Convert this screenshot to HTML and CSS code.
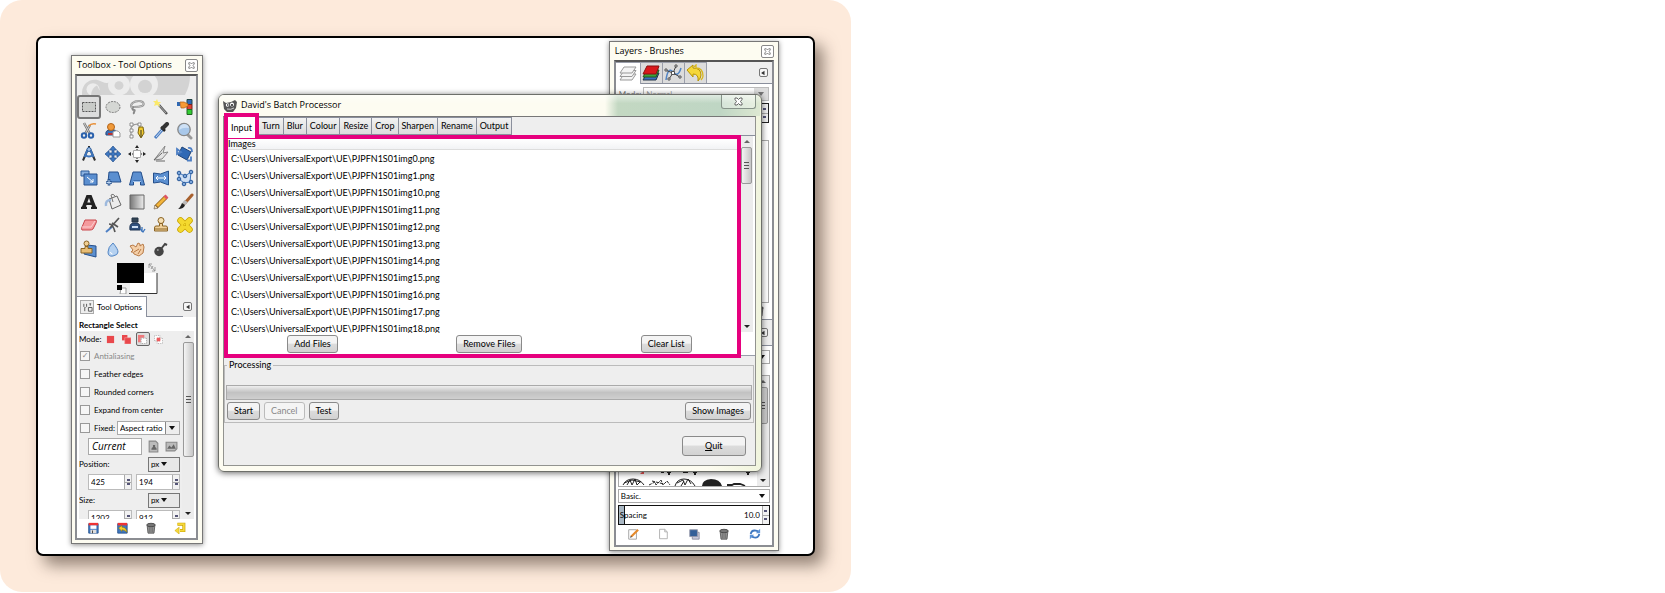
FILE: index.html
```html
<!DOCTYPE html>
<html lang="en">
<head>
<meta charset="utf-8">
<title>David's Batch Processor</title>
<link rel="stylesheet" href="styles.css">
</head>
<body>
<svg class="defs" width="0" height="0" aria-hidden="true">
  <defs>
    <linearGradient id="gGrey"><stop offset="0" stop-color="#777"/><stop offset="1" stop-color="#eee"/></linearGradient>
    <g id="x"><path d="M1 1h2l1.500 1.500L6 1h2v1.500L6.500 4.500 8 6.500V8H6L4.500 6.500 3 8H1V6.500l1.500-2L1 2.500z" fill="#fff" stroke="#555" stroke-width=".9"/></g>
    <g id="left"><path d="M6 1v6L1.500 4z" fill="#333"/></g>
    <g id="trash"><path d="M2.500 4h9l-1 9h-7z" fill="#999" stroke="#555"/><ellipse cx="7" cy="3.500" rx="5" ry="2" fill="#777" stroke="#444"/><path d="M5 6v6M7 6v6M9 6v6" stroke="#555" stroke-width=".7"/></g>
  </defs>
</svg>
<main class="card">
  <div class="board">

    <section class="win toolbox">
      <header class="title"><h2>Toolbox - Tool Options</h2><button class="close" aria-label="Close toolbox"><svg viewBox="0 0 9 9"><use href="#x"/></svg></button></header>
      <div class="frame">
        <svg class="banner" viewBox="0 0 108 20" preserveAspectRatio="none"><path d="M0 20C-1 7 10 0 20 6Q28 10 30 2L31 0H108Q108 10 103 20z" fill="#d3d3d3"/><circle cx="11" cy="14" r="6.500" fill="#ececec"/><path d="M9 20q1-8 6-10l5 10z" fill="#d3d3d3"/><circle cx="37" cy="9.500" r="11" fill="#ececec"/><circle cx="37" cy="10" r="4.500" fill="#d3d3d3"/><circle cx="62" cy="9" r="14" fill="#ececec"/><circle cx="63" cy="11" r="7" fill="#d3d3d3"/></svg>
        <div class="tools">
          <button class="on" aria-label="Rectangle select"><svg viewBox="0 0 18 18"><path d="M2.500 4.500h13v9h-13z" fill="#c9cbc8" stroke="#555" stroke-dasharray="2 1"/></svg></button>
          <button aria-label="Ellipse select"><svg viewBox="0 0 18 18"><ellipse cx="9" cy="9" rx="7" ry="5.500" fill="#d5d7d4" stroke="#777" stroke-dasharray="2 1"/></svg></button>
          <button aria-label="Free select"><svg viewBox="0 0 18 18"><path d="M4 10C1 6 6 3 11 3s6 4 3 5-6 1-8 1-2 3 0 3-1 2 0 4" fill="none" stroke="#888" stroke-width="2"/><path d="M4 10C1 6 6 3 11 3s6 4 3 5-6 1-8 1" fill="none" stroke="#ddd" stroke-width=".7"/></svg></button>
          <button aria-label="Fuzzy select"><svg viewBox="0 0 18 18"><path d="M7 7l8 9" stroke="#555" stroke-width="2.500"/><path d="M7 7l7 8" stroke="#aaa"/><path d="M5 1l1 3 3 0-2 2 1 3-3-2-3 1 1-3-2-2h3z" fill="#fbe96a"/></svg></button>
          <button aria-label="Select by color"><svg viewBox="0 0 18 18"><path d="M11 1.500h5v5h-5z" fill="#2f69b5" stroke="#244"/><path d="M11 6.500h5v5h-5z" fill="#d43" stroke="#722"/><path d="M11 11.500h5v5h-5z" fill="#3c3" stroke="#262"/><path d="M1 4h3v4H1z" fill="#2f69b5"/><path d="M4 4h4l4 2v2l-4 2H5z" fill="#f79a35" stroke="#b05a10" stroke-width=".7"/></svg></button>

          <button aria-label="Scissors select"><svg viewBox="0 0 18 18"><path d="M4 1l6 11M10 3L5 12" stroke="#777" stroke-width="2.500"/><path d="M4 1l6 11M10 3L5 12" stroke="#ccc"/><path d="M9 4q2-3 7-2" stroke="#e9913a" fill="none" stroke-width="1.500"/><circle cx="4" cy="13.500" r="2.200" fill="none" stroke="#2b62ad" stroke-width="2"/><circle cx="11" cy="13.500" r="2.200" fill="none" stroke="#2b62ad" stroke-width="2"/></svg></button>
          <button aria-label="Foreground select"><svg viewBox="0 0 18 18"><path d="M2 13q-1-5 4-5h4q3 0 3 5z" fill="#3b6fb6" stroke="#27497c"/><path d="M4 11h7v2H4z" fill="#b33"/><circle cx="7" cy="5" r="3.500" fill="#f09a3a" stroke="#b3641a"/><path d="M9 15V10q4-3 7 1v4z" fill="#fff" stroke="#999"/></svg></button>
          <button aria-label="Paths"><svg viewBox="0 0 18 18"><path d="M3 16V6q1-4 8-4" stroke="#888" fill="none"/><path d="M2 1h3v3H2zM2 7h3v3H2zM2 13h3v3H2zM10 1h3v3h-3z" fill="#fff" stroke="#777" stroke-width=".8"/><path d="M11 5h4l1 6-3 5-3-5z" fill="#f3cc2f" stroke="#7a6210"/><path d="M13 8v7" stroke="#333"/></svg></button>
          <button aria-label="Color picker"><svg viewBox="0 0 18 18"><path d="M11 7l-8 9" stroke="#4d7fc4" stroke-width="3"/><path d="M10 8l-6 7" stroke="#c7dbf2"/><path d="M9 5l4 4" stroke="#222" stroke-width="2.500"/><path d="M11 6l4-4" stroke="#333" stroke-width="4" stroke-linecap="round"/></svg></button>
          <button aria-label="Zoom"><svg viewBox="0 0 18 18"><path d="M11 12l4 4" stroke="#999" stroke-width="3" stroke-linecap="round"/><circle cx="8" cy="7.500" r="6.200" fill="#a9c8ea" stroke="#888" stroke-width="1.300"/><path d="M3 8q4-3 10-2-1-4-5-4T3 8z" fill="#cfe1f5"/></svg></button>

          <button aria-label="Measure"><svg viewBox="0 0 18 18"><path d="M9 1v3M7.500 5L3 15.500M10.500 5L15 15.500" fill="none" stroke="#333" stroke-width="2"/><path d="M7.500 5L4.500 12M10.500 5l3 7M5 10q4 3 8 0" fill="none" stroke="#3c74bc" stroke-width="2"/><circle cx="9" cy="4.500" r="2" fill="#9dbde4" stroke="#2d5f9f"/></svg></button>
          <button aria-label="Move"><svg viewBox="0 0 18 18"><path d="M9 1l3.500 4H10v3h3V5.500L17 9l-4 3.500V10h-3v3h2.500L9 17l-3.500-4H8v-3H5v2.500L1 9l4-3.500V8h3V5H5.500z" fill="#3f78c0" stroke="#244f8c" stroke-width=".7"/></svg></button>
          <button aria-label="Align"><svg viewBox="0 0 18 18"><path d="M5.500 5.500h7v7h-7z" fill="#fff" stroke="#aaa"/><path d="M9 0l2 3H7zM9 18l2-3H7zM0 9l3-2v4zM18 9l-3-2v4z" fill="#222"/><path d="M9 2v3M9 13v3M2 9h3M13 9h3" stroke="#222" stroke-dasharray="1 1"/></svg></button>
          <button aria-label="Crop"><svg viewBox="0 0 18 18"><path d="M2 15L13 1l-2 7 5-1-6 7z" fill="#e4e4e4" stroke="#888"/><path d="M2 15l8-7M4 16h9" stroke="#666"/></svg></button>
          <button aria-label="Rotate"><svg viewBox="0 0 18 18"><path d="M6 2l9 5-4 8-9-5z" fill="#2f69b5" stroke="#1f4478"/><path d="M1 4l4 3-4 2zM12 3q4-1 4 4M11 15.500h4v-4" fill="none" stroke="#4d7fc4" stroke-width="1.800"/></svg></button>

          <button aria-label="Scale"><svg viewBox="0 0 18 18"><path d="M1 2h8v5H1z" fill="#8bb2e0" stroke="#2b5a99"/><path d="M4 5h13v11H4z" fill="#5b8fd0" stroke="#244f8c"/><path d="M7 8l6 5m0-3v3h-3" stroke="#fff" fill="none"/></svg></button>
          <button aria-label="Shear"><svg viewBox="0 0 18 18"><path d="M5 3h9l3 10H4z" fill="#5b8fd0" stroke="#244f8c"/><path d="M5 10v6.500M2 13.500h6" stroke="#244f8c" stroke-width="2.600"/><path d="M5 11v4.500M2.500 13.500h5" stroke="#bcd6f2"/></svg></button>
          <button aria-label="Perspective"><svg viewBox="0 0 18 18"><path d="M5 3h8l3.500 13h-4v-4h-7v4h-4z" fill="#5b8fd0" stroke="#244f8c"/><path d="M5 12.500h8" stroke="#9dc0ea"/></svg></button>
          <button aria-label="Flip"><svg viewBox="0 0 18 18"><path d="M1.500 4l7 1 8-3v14l-8-3-7 1z" fill="#5b8fd0" stroke="#244f8c"/><path d="M4 9h10M6 7L4 9l2 2M12 7l2 2-2 2" stroke="#fff" fill="none"/></svg></button>
          <button aria-label="Cage transform"><svg viewBox="0 0 18 18"><path d="M3 4l6 3 6-4-1 10-6 1-5-4z" fill="#cfdff3" stroke="#3c74bc"/><g fill="#7ba5da" stroke="#2b5a99"><circle cx="3" cy="4" r="1.800"/><circle cx="9" cy="7" r="1.800"/><circle cx="15" cy="3" r="1.800"/><circle cx="15" cy="13" r="1.800"/><circle cx="8" cy="15" r="1.800"/><circle cx="3" cy="10" r="1.800"/></g></svg></button>

          <button aria-label="Text"><svg viewBox="0 0 18 18"><path d="M1 16v-2l1-.5L6.500 2h5L16 13.500l1 .5v2h-6v-2l1-.5-.5-1.500h-5L6 13.500l1 .5v2zM7.300 9.500h3.200L9 5z" fill="#222" fill-rule="evenodd"/></svg></button>
          <button aria-label="Bucket fill"><svg viewBox="0 0 18 18"><path d="M5 6l8-3 4 9-9 4z" fill="#ececec" stroke="#666"/><path d="M2 13q-1-6 5-6" fill="none" stroke="#9db9dd" stroke-width="2.500"/><path d="M9 9L7 2q2-2 4 1" fill="none" stroke="#777"/></svg></button>
          <button aria-label="Blend"><svg viewBox="0 0 18 18"><path d="M2 2h14v14H2z" fill="url(#gGrey)" stroke="#666"/></svg></button>
          <button aria-label="Pencil"><svg viewBox="0 0 18 18"><path d="M4 14L14 4" stroke="#8a5a14" stroke-width="4.500"/><path d="M5 13l9-9" stroke="#f2b43c" stroke-width="3"/><path d="M13 5l2-2" stroke="#d56" stroke-width="4"/><path d="M2 16l1-4 3 3z" fill="#f5dfb8" stroke="#654" stroke-width=".6"/></svg></button>
          <button aria-label="Paintbrush"><svg viewBox="0 0 18 18"><path d="M16 2L9 10" stroke="#a8612e" stroke-width="3" stroke-linecap="round"/><path d="M10 8l-2 3" stroke="#bbb" stroke-width="4"/><path d="M9 12q-1 4-7 4 2-1 4-6z" fill="#222"/></svg></button>

          <button aria-label="Eraser"><svg viewBox="0 0 18 18"><path d="M5 4h11q1 1 0 3l-3 6q-1 1-3 1H2q-1-1 0-3z" fill="#f59a9d" stroke="#c9464c"/><path d="M2 11h9l4-6" fill="none" stroke="#fbd0d2"/></svg></button>
          <button aria-label="Airbrush"><svg viewBox="0 0 18 18"><path d="M2 16l7-6" stroke="#4d7fc4" stroke-width="2"/><path d="M6 12l9-10M8 7l6 4M5 8q4 0 6 8" stroke="#555" stroke-width="1.700" fill="none"/></svg></button>
          <button aria-label="Ink"><svg viewBox="0 0 18 18"><path d="M4 2h6v4H4z" fill="#345" stroke="#234"/><path d="M2 14q-1-6 3-7h4q4 1 3 7z" fill="#31527f" stroke="#1d3352"/><path d="M4 10h6v2H4z" fill="#cfe0f4"/><path d="M12 13l3 3 2-3M14 11v5" fill="none" stroke="#3c74bc" stroke-width="1.300"/></svg></button>
          <button aria-label="Clone"><svg viewBox="0 0 18 18"><circle cx="9" cy="4.500" r="3" fill="#f6e0b5" stroke="#8a6425"/><path d="M7.500 7.500h3V10H14q1.500 0 1.500 2v3h-13v-3q0-2 1.500-2h3.500z" fill="#f0d09a" stroke="#8a6425"/><path d="M3 13h12" stroke="#8a6425"/></svg></button>
          <button aria-label="Heal"><svg viewBox="0 0 18 18"><path d="M4.500 4.500l9 9M13.500 4.500l-9 9" stroke="#c9a400" stroke-width="6.500" stroke-linecap="round"/><path d="M4.500 4.500l9 9M13.500 4.500l-9 9" stroke="#f4d92e" stroke-width="5" stroke-linecap="round"/><path d="M7 9h4M9 7v4" stroke="#c9a400" stroke-dasharray="1 1"/></svg></button>

          <button aria-label="Perspective clone"><svg viewBox="0 0 18 18"><path d="M7 5l9 1v11l-12-3z" fill="#5b8fd0" stroke="#244f8c"/><circle cx="6.500" cy="3.500" r="2.500" fill="#f0cf94" stroke="#8a6425"/><path d="M5 6.500h3v2h4V13H1V8.500h4z" fill="#e8bd74" stroke="#8a6425"/></svg></button>
          <button aria-label="Blur"><svg viewBox="0 0 18 18"><path d="M9 3q5 6 5 9t-5 4-5-4 5-9z" fill="#b5d1f0" stroke="#5285c4"/><path d="M6.500 12q0 2 2 2" stroke="#fff" fill="none"/></svg></button>
          <button aria-label="Smudge"><svg viewBox="0 0 18 18"><path d="M2 6l3-1 3 2 2-4 2 1v2l3-2 1 3-1 6-4 3-5-2-1-2H3l2-2z" fill="#f4cfa8" stroke="#b87b48"/><path d="M6 12l5-3M10 14l3-5" stroke="#b87b48"/></svg></button>
          <button aria-label="Dodge"><svg viewBox="0 0 18 18"><circle cx="7" cy="11.500" r="4.700" fill="#444"/><path d="M9 9l4-5 2 1" stroke="#444" stroke-width="2" fill="none"/><circle cx="5.800" cy="10" r="1" fill="#999"/></svg></button>
        </div>
        <div class="swatches">
          <svg viewBox="0 0 42 31"><path d="M14 10h27v21H14z" fill="#fff"/><path d="M41 10v20.500H13" fill="none" stroke="#333"/><path d="M1 0h27v20H1z" fill="#000"/><path d="M5 25h5v6H4z" fill="#fff" stroke="#999"/><path d="M1 22h5v5H1z" fill="#000"/><path d="M33 5V1h3M33 1l6 7M39 4v4h-3M35 6l2-3" fill="none" stroke="#888" stroke-width=".8"/></svg>
        </div>
        <div class="dockhead">
          <div class="docktab"><span class="chip"><svg viewBox="0 0 12 12"><path d="M2 2v3l1 1v4M5 2v3L4 6M8 2h2M9 2v2M7 6h4v4H7z" fill="none" stroke="#555"/></svg></span>Tool Options</div>
          <button class="menu" aria-label="Configure this tab"><svg viewBox="0 0 8 8"><use href="#left"/></svg></button>
        </div>
        <div class="options">
          <h3>Rectangle Select</h3>
          <div class="optview">
            <div class="optlist">
              <div class="row mode">Mode:
                <button aria-label="Replace"><svg viewBox="0 0 10 10"><path d="M1 1h8v8H1z" fill="#e9484c"/></svg></button>
                <button aria-label="Add"><svg viewBox="0 0 10 10"><path d="M0 0h6v6H0z" fill="#e9484c"/><path d="M3 3h7v7H3z" fill="#e9484c" stroke="#f5a5a6" stroke-width=".6"/></svg></button>
                <button class="on" aria-label="Subtract"><svg viewBox="0 0 10 10"><path d="M0 0h7v3H3v5H0z" fill="#ee7a7c"/><path d="M3.500 3.500h6v6h-6z" fill="#fff" stroke="#999" stroke-dasharray="1 1"/></svg></button>
                <button aria-label="Intersect"><svg viewBox="0 0 10 10"><path d="M.5.5h6v6h-6zM3.500 3.500h6v6h-6z" fill="#fff" stroke="#aaa" stroke-dasharray="1 1"/><path d="M3 3h4v4H3z" fill="#ee5a5d"/></svg></button>
              </div>
              <label class="row dim"><input type="checkbox" checked disabled>Antialiasing</label>
              <label class="row"><input type="checkbox">Feather edges</label>
              <label class="row"><input type="checkbox">Rounded corners</label>
              <label class="row"><input type="checkbox">Expand from center</label>
              <div class="row fixed"><label><input type="checkbox">Fixed:</label><span class="drop grow"><select aria-label="Fixed"><option>Aspect ratio</option></select></span></div>
              <div class="row current"><input type="text" value="Current" aria-label="Ratio">
                <button aria-label="Portrait"><svg viewBox="0 0 12 12"><path d="M2 1h6l2 2v8H2z" fill="#bbb" stroke="#888"/><path d="M4 9q0-2 1.500-2.500v-2h2v2Q9 7 9 9z" fill="#666"/></svg></button>
                <button aria-label="Landscape"><svg viewBox="0 0 12 12"><path d="M1 2h10v6L9 10H1z" fill="#bbb" stroke="#888"/><path d="M2 8l2-3 2 2 2-3 2 4z" fill="#666"/></svg></button>
              </div>
              <div class="row unit"><span>Position:</span><span class="drop px"><select aria-label="Position unit"><option>px</option></select></span></div>
              <div class="row pair"><span class="spin"><input type="text" value="425" aria-label="Position x"><i></i></span><span class="spin"><input type="text" value="194" aria-label="Position y"><i></i></span></div>
              <div class="row unit"><span>Size:</span><span class="drop px"><select aria-label="Size unit"><option>px</option></select></span></div>
              <div class="row pair"><span class="spin"><input type="text" value="1202" aria-label="Width"><i></i></span><span class="spin"><input type="text" value="912" aria-label="Height"><i></i></span></div>
            </div>
            <div class="scroll"><i class="up"></i><b class="thumb tall"></b><i class="down"></i></div>
          </div>
          <div class="iconbar">
            <button aria-label="Save options"><svg viewBox="0 0 14 14"><path d="M2 2h11v11H2z" fill="#3f78c0" stroke="#27538f"/><path d="M2 1h11v3H2z" fill="#e33"/><path d="M4 4h7v4H4z" fill="#fff"/><path d="M4 9h7v4H4z" fill="#ddd"/><path d="M6 10h1v3H6z" fill="#333"/></svg></button>
            <button aria-label="Restore options"><svg viewBox="0 0 14 14"><path d="M2 2h11v11H2z" fill="#3f78c0" stroke="#27538f"/><path d="M2 1h11v3H2z" fill="#e33"/><path d="M3 7l4-3v2q5 0 6 6-3-3-6-3v2z" fill="#f5cf2a" stroke="#8a6d00" stroke-width=".6"/></svg></button>
            <button aria-label="Delete options"><svg viewBox="0 0 14 14"><use href="#trash"/></svg></button>
            <button aria-label="Reset options"><svg viewBox="0 0 14 14"><path d="M4 2.500h7.500V10H7" fill="none" stroke="#c9a400" stroke-width="3.500"/><path d="M4 2.500h7.500V10H7" fill="none" stroke="#f5d73a" stroke-width="2"/><path d="M1 10l5-4v8z" fill="#f5d73a" stroke="#c9a400" stroke-width=".6"/></svg></button>
          </div>
        </div>
      </div>
    </section>

    <section class="win layers">
      <header class="title"><h2>Layers - Brushes</h2><button class="close" aria-label="Close layers"><svg viewBox="0 0 9 9"><use href="#x"/></svg></button></header>
      <div class="frame">
        <div class="ltabs">
          <button class="sel" aria-label="Layers"><svg viewBox="0 0 18 18"><g fill="#f4f4f4" stroke="#999"><path d="M5 10h12l-4 6H1z"/><path d="M5 6.500h12l-4 6H1z"/><path d="M5 3h12l-4 6H1z"/></g></svg></button>
          <button aria-label="Channels"><svg viewBox="0 0 18 18"><path d="M5 9h12l-3 7H1z" fill="#3a6fc0" stroke="#234"/><path d="M5 6h12l-3 7H1z" fill="#3aa53a" stroke="#252"/><path d="M5 2h12l-3 8H1z" fill="#d8191c" stroke="#811"/></svg></button>
          <button aria-label="Paths"><svg viewBox="0 0 18 18"><path d="M2 16Q4 2 9 8t8-4" fill="none" stroke="#5285c4" stroke-width="1.500"/><path d="M1 6l8 3 7 4M5 15l4-6 3-7" fill="none" stroke="#444"/><path d="M1 5h2v2H1zM7.500 7.500h3v3h-3zM15 12h2v2h-2zM11 1h2v2h-2zM4 14h2v2H4z" fill="#fff" stroke="#333" stroke-width=".8"/></svg></button>
          <button aria-label="Undo history"><svg viewBox="0 0 18 18"><path d="M1 6l6-5v3q8 0 8 7 0 3-3 6 1-7-5-7v3z" fill="#f5d73a" stroke="#b89500"/><path d="M8 3l2-2v3q7 0 7 8 0 2-2 4" fill="none" stroke="#d9b71c" stroke-width="1.300"/></svg></button>
          <button class="menu" aria-label="Configure this tab"><svg viewBox="0 0 8 8"><use href="#left"/></svg></button>
        </div>
        <div class="lbody">
          <div class="lmode"><label for="lm">Mode:</label><span class="drop grow faint"><select id="lm" disabled><option>Normal</option></select></span></div>
          <div class="lopacity"><span class="spin"><input type="text" aria-label="Opacity" disabled><i></i></span></div>
          <div class="llist"></div>
          <svg class="ltrash" viewBox="0 0 14 14"><use href="#trash"/></svg>
        </div>
        <div class="bstrip"><button class="menu" aria-label="Configure brushes tab"><svg viewBox="0 0 8 8"><use href="#left"/></svg></button></div>
        <div class="bbody">
          <span class="drop filter"><select aria-label="Filter"><option></option></select></span>
          <div class="brushes">
            <svg viewBox="0 0 136 18"><path d="M25 2v4h-4z" fill="#e55"/><g fill="#222"><path d="M42 3h3v2h-3zM48 4h4v1h-4zM49 3h2v4h-2zM64 3h5v2h-5zM74 4h4v1h-4zM75 3h2v4h-2zM88 3h2v1h-2zM93 3h1v1h-1zM118 3h3v1h-3zM127 4h4v1h-4zM128 3h2v4h-2z"/><path d="M83 18q0-6 9-7 9 0 11 7z"/></g><g fill="none" stroke="#222" stroke-width="1"><path d="M4 17q3-6 10-6t11 6M8 17l3-5 2 5 3-6 2 6 4-4M5 15l8-3 9 2"/><path d="M30 17l6-3 1 3 5-5 2 5 4-4 3 4M33 13l12 3" stroke-dasharray="3 1"/><path d="M56 18q2-7 9-7t11 7M58 15l6-3 2 5 3-6 3 5M62 18l3-5"/><path d="M108 17h5l2-1h6l3 1 2 1" stroke-width="1.800"/></g></svg>
            <div class="scroll"><i class="up"></i><b class="thumb"></b><i class="down"></i></div>
          </div>
          <span class="drop basic"><select aria-label="Brush set"><option>Basic.</option></select></span>
          <div class="spacing"><label for="sp">Spacing</label><input id="sp" type="text" value="10.0"><i class="arrows"></i></div>
          <div class="iconbar">
            <button aria-label="Edit brush"><svg viewBox="0 0 14 14"><path d="M2 2h9v11H2z" fill="#fff" stroke="#999"/><path d="M5 10l8-8" stroke="#e58a2c" stroke-width="2.500"/><path d="M3.500 11.500l1-2.500 1.500 1.500z" fill="#333"/></svg></button>
            <button aria-label="New brush"><svg viewBox="0 0 14 14"><path d="M3 1.500h6l3 3v8H3z" fill="#fff" stroke="#aaa"/><path d="M9 1.500v3h3" fill="none" stroke="#aaa"/></svg></button>
            <button aria-label="Duplicate brush"><svg viewBox="0 0 14 14"><path d="M5 5h8v8H5z" fill="#ccd" stroke="#889"/><path d="M2 2h9v8H2z" fill="#345f98" stroke="#99a"/></svg></button>
            <button aria-label="Delete brush"><svg viewBox="0 0 14 14"><use href="#trash"/></svg></button>
            <button aria-label="Refresh brushes"><svg viewBox="0 0 14 14"><path d="M2 7q1-5 6-4l3 1M12 7q-1 5-6 4L3 10" fill="none" stroke="#3f78c0" stroke-width="2.200"/><path d="M13 1v5H8zM1 13V8h5z" fill="#5b93d8"/></svg></button>
          </div>
        </div>
      </div>
    </section>

    <section class="win batch">
      <header class="title">
        <svg class="wilber" viewBox="0 0 14 12"><path d="M0 1l3 2 5-1 4-2 2 2-1 6-3 4H4L1 9z" fill="#555"/><circle cx="4.500" cy="5" r="1.700" fill="#fff"/><circle cx="9" cy="4.500" r="2" fill="#fff"/><circle cx="4.800" cy="5" r=".8"/><circle cx="9" cy="5" r=".9"/><path d="M4 9q4 1 7-1" stroke="#ccc" fill="none"/></svg>
        <h2>David's Batch Processor</h2>
        <button class="close wide" aria-label="Close"><svg viewBox="0 0 9 9"><use href="#x"/></svg></button>
      </header>
      <div class="frame">
        <nav class="tabs" role="tablist">
          <button class="sel" role="tab" aria-selected="true">Input</button><button role="tab">Turn</button><button role="tab">Blur</button><button role="tab">Colour</button><button role="tab">Resize</button><button role="tab">Crop</button><button role="tab">Sharpen</button><button role="tab">Rename</button><button role="tab">Output</button>
        </nav>
        <div class="page">
          <div class="marked">
            <table class="files">
              <thead><tr><th>Images</th></tr></thead>
            </table>
            <div class="fileview">
              <ul>
                <li>C:\Users\UniversalExport\UE\PJPFN1S01img0.png</li>
                <li>C:\Users\UniversalExport\UE\PJPFN1S01img1.png</li>
                <li>C:\Users\UniversalExport\UE\PJPFN1S01img10.png</li>
                <li>C:\Users\UniversalExport\UE\PJPFN1S01img11.png</li>
                <li>C:\Users\UniversalExport\UE\PJPFN1S01img12.png</li>
                <li>C:\Users\UniversalExport\UE\PJPFN1S01img13.png</li>
                <li>C:\Users\UniversalExport\UE\PJPFN1S01img14.png</li>
                <li>C:\Users\UniversalExport\UE\PJPFN1S01img15.png</li>
                <li>C:\Users\UniversalExport\UE\PJPFN1S01img16.png</li>
                <li>C:\Users\UniversalExport\UE\PJPFN1S01img17.png</li>
                <li>C:\Users\UniversalExport\UE\PJPFN1S01img18.png</li>
              </ul>
            </div>
            <div class="actions"><button class="btn">Add Files</button><button class="btn">Remove Files</button><button class="btn">Clear List</button></div>
          </div>
          <div class="scroll side"><i class="up"></i><b class="thumb"></b><i class="down"></i></div>
        </div>
        <fieldset class="proc">
          <legend>Processing</legend>
          <div class="bar" role="progressbar" aria-label="Processing"></div>
          <div class="run"><button class="btn">Start</button><button class="btn" disabled>Cancel</button><button class="btn">Test</button><button class="btn last">Show Images</button></div>
        </fieldset>
        <div class="foot"><button class="btn quit"><u>Q</u>uit</button></div>
      </div>
    </section>

  </div>
</main>
</body>
</html>
```
FILE: styles.css
```css
* { box-sizing: border-box; }
body { margin: 0; background: #fff; color: #000; font: 9px/14px Lato, "Open Sans", sans-serif; }
.defs { display: block; position: absolute; }
h2, h3, ul { margin: 0; padding: 0; font-size: inherit; font-weight: normal; list-style: none; }
button, input, select { font: inherit; color: inherit; margin: 0; padding: 0; border: 0; background: none; min-width: 0; }
svg { display: block; }

.card { width: 51.1%; min-width: 760px; padding: 36px; background: #fdeadb; border-radius: 22px; }
.board {
  display: grid; grid-template-columns: 132px minmax(0, 1fr); column-gap: 15px; align-items: start;
  padding: 3px 34px 3px 33px; background: #fff; border: 2px solid #000; border-radius: 7px;
  box-shadow: 8px 9px 16px rgba(75, 60, 50, .6);
}
.win { display: flex; flex-direction: column; background: #fdfcf1; border: 1px solid #777; box-shadow: 0 1px 5px rgba(0, 0, 0, .45); }
.title { display: flex; align-items: center; height: 18px; padding: 0 4px 0 5px; }
.title h2 { flex: 1; font: 9px/14px "Open Sans", "Noto Sans", sans-serif; white-space: nowrap; }
.close { display: grid; place-items: center; width: 13px; height: 13px; background: #fff; border: 1px solid #888; border-radius: 2px; }
.close svg { width: 7px; height: 7px; }
.frame { flex: 1; display: flex; flex-direction: column; border: 2px solid #8b8d92; border-top-color: #555; background: #eee; }

.toolbox { grid-area: 1 / 1; margin-top: 14px; height: 489px; padding-bottom: 2px; }
.toolbox .frame { margin: 0 4px 1px 3px; min-height: 0; }
.layers .frame { margin: 0 4px 1px; min-height: 0; }
.banner { width: 108px; height: 19px; margin: 0 auto 0 5px; flex: none; }
.tools { display: grid; grid-template-columns: repeat(5, 24px); grid-template-rows: repeat(7, 1fr); height: 166px; flex: none; }
.tools button { display: grid; place-items: center; }
.tools svg { width: 18px; height: 18px; }
.tools .on { border: 2px solid #777; border-radius: 3px; background: #ddd; }
.swatches { padding: 2px 0 0 39px; height: 35px; flex: none; }
.swatches svg { width: 42px; height: 31px; }
.dockhead { display: flex; align-items: flex-end; height: 21px; flex: none; }
.docktab { display: flex; align-items: center; gap: 3px; width: 70px; height: 21px; padding-left: 3px; background: #fff; border: 1px solid #8a8f9c; border-width: 1px 1px 0 0; font-size: 8px; white-space: nowrap; }
.dockhead::after { content: ""; order: 1; flex: 1; border-bottom: 1px solid #8a8f9c; }
.chip { display: grid; place-items: center; width: 14px; height: 14px; border: 1px solid #aaa; background: #eee; }
.chip svg { width: 11px; height: 11px; }
.menu { display: grid; place-items: center; width: 9px; height: 9px; border: 1px solid #777; border-radius: 2px; background: #f6f6f6; }
.menu svg { width: 6px; height: 6px; }
.dockhead .menu { order: 2; margin: 0 4px 6px 0; }
.options { flex: 1; padding: 2px 2px 0; background: #fff; font-size: 8px; line-height: 12px; }
.options h3 { font-weight: bold; }
.optview { display: flex; height: 188px; overflow: hidden; background: #eee; }
.optlist { width: 101px; flex: none; }
.row { display: flex; align-items: center; gap: 4px; height: 18px; white-space: nowrap; }
.row input[type=checkbox] { appearance: none; display: grid; place-items: center; width: 10px; height: 10px; margin-left: 1px; border: 1px solid #999; background: #f6f6f6; }
.row input:checked::after { content: "✓"; font: 8px/8px "DejaVu Sans", sans-serif; color: #888; }
.dim { color: #888; }
.row.mode { gap: 2px; height: 16px; }
.mode button { display: grid; place-items: center; width: 14px; height: 14px; }
.mode svg { width: 9px; height: 9px; }
.mode .on { border: 1px solid #666; border-radius: 2px; background: #ddd; }
.fixed label { display: flex; align-items: center; gap: 4px; }
.fixed { gap: 2px; }
.drop { display: grid; align-items: center; height: 14px; background: #fff; border: 1px solid #aaa; }
.drop select { grid-area: 1 / 1; appearance: none; width: 100%; height: 12px; padding-left: 2px; line-height: 12px; }
.drop::after { content: ""; grid-area: 1 / 1; justify-self: end; margin-right: 4px; border: 3px solid transparent; border-top: 4px solid #111; border-bottom: 0; pointer-events: none; }
.grow { flex: 1; }
.fixed .drop { background: linear-gradient(90deg, #fff calc(100% - 14px), #888 calc(100% - 14px), #888 calc(100% - 13px), #eee calc(100% - 13px)); }
.current input { width: 54px; height: 17px; margin-left: 9px; padding-left: 3px; background: #fff; border: 1px solid #aaa; font: italic 10px/15px "Open Sans", sans-serif; }
.current button svg { width: 13px; height: 13px; }
.current { gap: 5px; }
.unit { justify-content: space-between; }
.px { width: 32px; height: 15px; background: #e8e8e8; border: 1px solid #777; }
.px::after { margin-right: 12px; }
.pair { padding-left: 9px; }
.spin { display: flex; flex: 1; height: 16px; background: #fff; border: 1px solid #bbb; }
.spin input { flex: 1; width: 0; padding-left: 2px; }
.spin i, .arrows {
  width: 7px; border-left: 1px solid #aaa;
  background:
    linear-gradient(#557, #557) center 4px / 3px 2px no-repeat,
    linear-gradient(#aaa, #aaa) center / 7px 1px no-repeat,
    linear-gradient(#557, #557) center calc(100% - 4px) / 3px 2px no-repeat, #f2f2f2;
}
.scroll { display: flex; flex-direction: column; align-items: center; width: 12px; margin-left: auto; background: #ececec; }
.optview .scroll { margin-left: 2px; }
.scroll i { flex: none; border: 3px solid transparent; margin: 4px 0; }
.scroll .up { border-bottom: 3px solid #666; border-top: 0; }
.scroll .down { border-top: 3px solid #222; border-bottom: 0; margin-top: auto; }
.thumb { width: 11px; height: 37px; border: 1px solid #999; border-radius: 2px; background: repeating-linear-gradient(#555 0 1px, transparent 1px 3px) center / 5px 7px no-repeat, linear-gradient(90deg, #f4f4f4, #c6c6c6); }
.thumb.tall { height: 115px; }
.iconbar { display: flex; justify-content: space-around; align-items: center; height: 18px; }
.iconbar svg { width: 12px; height: 12px; }

.layers { grid-area: 1 / 2; justify-self: end; width: 170px; height: 510px; padding-bottom: 2px; }
.layers .frame { background: #fff; }
.ltabs { display: flex; align-items: center; height: 22px; background: #eee; border-bottom: 1px solid #8a8f9c; flex: none; }
.ltabs button:not(.menu) { display: grid; place-items: center; width: 22px; height: 21px; border: 1px solid #9a9eaa; border-width: 1px 1px 0 0; background: #dcdcdc; }
.ltabs .sel.sel { width: 25px; height: 22px; background: #fff; }
.ltabs svg { width: 18px; height: 18px; }
.ltabs .menu, .bstrip .menu { margin-left: auto; margin-right: 4px; }
.menu.menu svg { width: 6px; height: 6px; }
.lbody { display: flex; flex-direction: column; height: 236px; padding: 3px 3px 0; font-size: 8px; line-height: 12px; flex: none; border-bottom: 1px solid #8a8f9c; }
.lmode { display: flex; align-items: center; color: #777; gap: 2px; }
.faint { border-color: #bbb; background: linear-gradient(90deg, #fff calc(100% - 14px), #ddd 0); }
.faint::after { border-top-color: #777; }
.lopacity { display: flex; }
.lopacity .spin { height: 20px; border-color: #222; margin-top: 2px; }
.llist { height: 164px; margin-top: 17px; border: 1px solid #aaa; }
.ltrash { width: 12px; height: 12px; align-self: flex-end; margin: 2px 4px; }
.bstrip { display: flex; align-items: center; height: 26px; background: #eee; border-bottom: 1px solid #8a8f9c; flex: none; }
.bbody { flex: 1; display: flex; flex-direction: column; padding: 4px 2px 0; font-size: 8px; line-height: 12px; }
.brushes { display: flex; align-items: flex-end; height: 112px; margin: 11px 0 2px; border: 1px solid #aaa; }
.brushes > svg { width: 136px; height: 18px; }
.brushes .scroll { align-self: stretch; }
.basic { height: 14px; margin-bottom: 2px; }
.spacing { display: flex; align-items: center; height: 20px; border: 1px solid #111; background: linear-gradient(90deg, #a9b7c3 5px, #111 5px, #111 6px, #fff 6px); }
.spacing label { padding-left: 1px; }
.spacing input { flex: 1; width: 0; padding-right: 2px; text-align: right; }
.arrows { align-self: stretch; }

.batch { position: relative; grid-area: 1 / 2; margin: 53px 17px 0 0; padding: 0 5px 5px 4px; border-radius: 6px; border-color: #6d6f6a; background: linear-gradient(90deg, #fdfcf1 90%, #f0f4dd); box-shadow: 0 1px 6px rgba(0, 0, 0, .6); }
.batch .title { height: 21px; margin: 0 -4px; padding: 0 4px; gap: 4px; border-radius: 5px 5px 0 0; background: linear-gradient(rgba(255, 255, 255, .5), transparent 40%), linear-gradient(90deg, #fdfcf1 calc(100% - 155px), #c3d8c2 calc(100% - 142px), #bfd6c4 calc(100% - 40px), #dde8d2); }
.batch .title h2 { line-height: 12px; padding-bottom: 2px; }
.wilber { width: 14px; height: 12px; }
.close.wide { align-self: flex-start; width: 35px; height: 14px; border-top: 0; border-radius: 0 0 3px 3px; background: rgba(255, 255, 255, .35); border-color: #87938a; }
.close.wide svg { width: 9px; height: 9px; }
.batch .frame { border: 1px solid #92938f; border-top-color: #777; }
.tabs { display: flex; height: 18px; }
.tabs button { padding: 0 3px; height: 18px; border: 1px solid #8a8f9c; border-left: 0; background: linear-gradient(#f2f2f2, #dcdcdc); white-space: nowrap; }
.tabs .sel { position: relative; z-index: 1; width: 35px; height: 25px; margin-top: -4px; background: #fff; border: 4px solid #e6007e; border-bottom: 0; }
.page { display: flex; background: #fff; border-bottom: 1px solid #9a9eaa; border-top: 1px solid #8a8f9c; }
.marked { flex: 1; border: 4px solid #e6007e; margin-bottom: -3px; margin-top: -1px; position: relative; }
.files { width: 100%; border-collapse: collapse; }
.files th { height: 10px; padding: 0; font-weight: normal; text-align: left; line-height: 10px; border-bottom: 1px solid #ddd; background: linear-gradient(#fff, #f2f3f5); }
.fileview { height: 183px; overflow: hidden; }
.fileview li { height: 17px; padding-left: 3px; line-height: 17px; }
.actions { display: flex; align-items: center; justify-content: space-around; height: 21px; margin-right: -14px; }
.btn { height: 18px; padding: 0 6px; border: 1px solid #8a8a8a; border-radius: 3px; background: linear-gradient(#f4f4f4 45%, #dcdcdc 50%, #d2d2d2); white-space: nowrap; }
.btn:disabled { color: #888; background: #f4f4f4; border-color: #bbb; }
.side { margin: 0 2px 23px 0; }
.proc { margin: 2px 1px 0 0; padding: 0 1px; border: 1px solid #bbb; min-width: 0; }
.proc legend { padding: 0 2px; margin-left: 1px; line-height: 14px; }
.bar { height: 15px; margin-top: 13px; border: 1px solid #aaa; background: linear-gradient(#eee, #c2c2c2 50%, #cfcfcf); }
.run { display: flex; gap: 4px; padding: 2px 1px; }
.run .last { margin-left: auto; }
.foot { display: flex; justify-content: flex-end; padding: 13px 9px 9px; }
.quit { width: 64px; height: 20px; }
```
